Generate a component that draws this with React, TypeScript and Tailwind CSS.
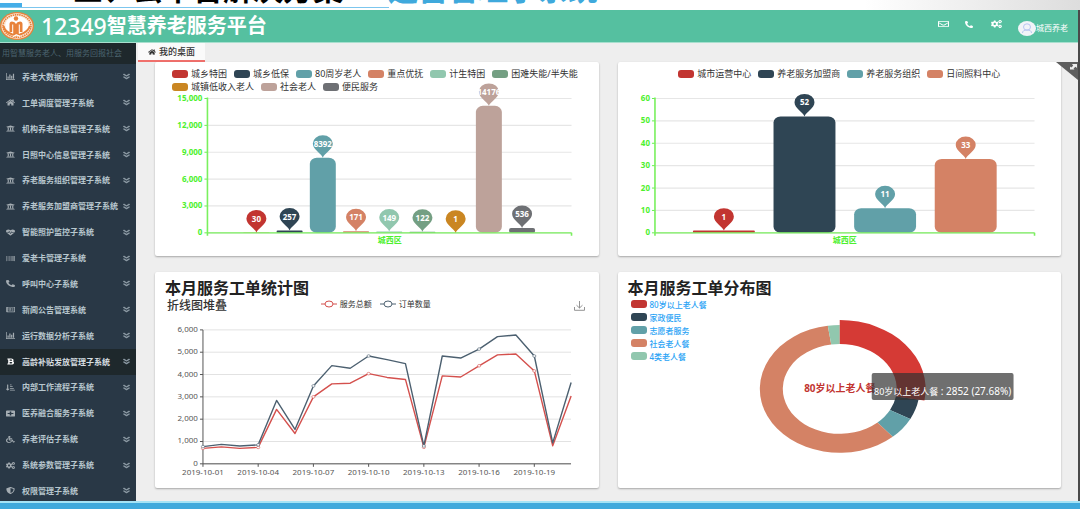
import React from "react";
import type { IconType } from "react-icons";
import {
  FaAngleDoubleDown,
  FaBarcode,
  FaBold,
  FaCogs,
  FaHeartbeat,
  FaHome,
  FaPhoneAlt,
  FaPlusSquare,
  FaRegEnvelope,
  FaRegNewspaper,
  FaShieldAlt,
  FaSortAmountDownAlt,
  FaUniversity,
  FaWheelchair,
} from "react-icons/fa";

interface LegendItem {
  name: string;
  color: string;
}

interface BarItem extends LegendItem {
  value: number;
}

const ChartIcon = ({ className }: { className?: string }) => (
  <svg viewBox="0 0 18 14" preserveAspectRatio="none" className={className} fill="currentColor">
    <path d="M0 0h1.4v12.6H18V14H0zM3 7h2.4v4.6H3zM6.6 3H9v8.6H6.6zM10.2 5.5h2.4v6.1h-2.4zM13.8 1.5h2.4v10.1h-2.4z" />
  </svg>
);

const menu: { label: string; icon: IconType | typeof ChartIcon; active?: boolean }[] = [
  { label: "养老大数据分析", icon: ChartIcon },
  { label: "工单调度管理子系统", icon: FaHome },
  { label: "机构养老信息管理子系统", icon: FaUniversity },
  { label: "日照中心信息管理子系统", icon: FaUniversity },
  { label: "养老服务组织管理子系统", icon: FaUniversity },
  { label: "养老服务加盟商管理子系统", icon: FaUniversity },
  { label: "智能照护监控子系统", icon: FaHeartbeat },
  { label: "爱老卡管理子系统", icon: FaBarcode },
  { label: "呼叫中心子系统", icon: FaPhoneAlt },
  { label: "新闻公告管理系统", icon: FaRegNewspaper },
  { label: "运行数据分析子系统", icon: ChartIcon },
  { label: "高龄补贴发放管理子系统", icon: FaBold, active: true },
  { label: "内部工作流程子系统", icon: FaSortAmountDownAlt },
  { label: "医养融合服务子系统", icon: FaPlusSquare },
  { label: "养老评估子系统", icon: FaWheelchair },
  { label: "系统参数管理子系统", icon: FaCogs },
  { label: "权限管理子系统", icon: FaShieldAlt },
];

const people: BarItem[] = [
  { name: "城乡特困", color: "#c23531", value: 30 },
  { name: "城乡低保", color: "#2f4554", value: 257 },
  { name: "80周岁老人", color: "#61a0a8", value: 8392 },
  { name: "重点优抚", color: "#d48265", value: 171 },
  { name: "计生特困", color: "#91c7ae", value: 149 },
  { name: "困难失能/半失能", color: "#749f83", value: 122 },
  { name: "城镇低收入老人", color: "#ca8622", value: 1 },
  { name: "社会老人", color: "#bda29a", value: 14176 },
  { name: "便民服务", color: "#6e7074", value: 536 },
];

const places: BarItem[] = [
  { name: "城市运营中心", color: "#c23531", value: 1 },
  { name: "养老服务加盟商", color: "#2f4554", value: 52 },
  { name: "养老服务组织", color: "#61a0a8", value: 11 },
  { name: "日间照料中心", color: "#d48265", value: 33 },
];

const pieLegend: LegendItem[] = [
  { name: "80岁以上老人餐", color: "#c23531" },
  { name: "家政便民", color: "#2f4554" },
  { name: "志愿者服务", color: "#61a0a8" },
  { name: "社会老人餐", color: "#d48265" },
  { name: "4类老人餐", color: "#91c7ae" },
];

const amounts = [690, 760, 690, 735, 2440, 1360, 3000, 3580, 3610, 4040, 3870, 3780, 740, 3940, 3890, 4390, 4880, 4920, 4160, 810, 3040];
const orders = [770, 870, 800, 850, 2840, 1540, 3490, 4400, 4280, 4830, 4670, 4490, 800, 4830, 4740, 5140, 5700, 5770, 4830, 940, 3640];
const dates = ["2019-10-01", "2019-10-04", "2019-10-07", "2019-10-10", "2019-10-13", "2019-10-16", "2019-10-19"];

const Legend = ({ items, className }: { items: LegendItem[]; className: string }) => (
  <ul className={className}>
    {items.map((item) => (
      <li key={item.name} className="flex items-center gap-[3px] whitespace-nowrap">
        <span className="h-2 w-4 rounded-[3px]" style={{ backgroundColor: item.color }} />
        {item.name}
      </li>
    ))}
  </ul>
);

interface BarChartProps {
  data: BarItem[];
  ticks: number[];
  left: number;
  right: number;
  first: number;
  step: number;
  barWidth: number;
  labelX: number;
}

const BarChart: React.FC<BarChartProps> = ({ data, ticks, left, right, first, step, barWidth, labelX }) => {
  const base = 140;
  const top = 5.5;
  const max = ticks[ticks.length - 1];
  const toY = (value: number) => base - ((base - top) * value) / max;

  return (
    <svg viewBox="0 0 444 163" className="block h-auto w-full overflow-visible">
      {ticks.map((tick) => (
        <g key={tick}>
          <path d={`M${left} ${toY(tick)}H${right}`} stroke="#e6e6e6" strokeWidth="1.2" />
          <path d={`M${left - 3} ${toY(tick)}h3`} stroke="#66f04c" />
          <text x={left - 5} y={toY(tick) + 2.5} textAnchor="end" fill="#4df02e" className="text-[8px] font-bold">
            {tick.toLocaleString("en-US")}
          </text>
        </g>
      ))}
      <path d={`M${left} ${top - 1}V${base + 3}M${right} ${base}v3`} stroke="#7af05e" strokeWidth="1.6" />
      {data.map((item, i) => {
        const x = first + i * step;
        const y = toY(item.value);
        const height = base - y;
        return (
          <rect
            key={item.name}
            x={x - barWidth / 2}
            y={y}
            width={barWidth}
            height={height}
            rx={Math.min(7, height / 2.5)}
            ry={Math.min(6, height / 2.5)}
            fill={item.color}
          />
        );
      })}
      <path d={`M${left} ${base}H${right}`} stroke="#7af05e" strokeWidth="1.4" />
      {data.map((item, i) => {
        const x = first + i * step;
        const y = toY(item.value);
        return (
          <g key={item.name}>
            <path
              d={`M${x} ${y}c-1.4-4.4-10-8-10-14.2a10 8.3 0 0 1 20 0c0 6.2-8.6 9.8-10 14.2z`}
              fill={item.color}
            />
            <text x={x} y={y - 11} textAnchor="middle" fill="#fff" className="text-[8px] font-bold">
              {item.value}
            </text>
          </g>
        );
      })}
      <text x={labelX} y="150" textAnchor="middle" fill="#4df02e" className="text-[8px] font-bold">
        城西区
      </text>
    </svg>
  );
};

const LineChart = () => {
  const toX = (i: number) => 48 + i * 18.43;
  const toY = (value: number) => 150 - value * 0.02235;
  const series = [
    { color: "#d4504d", values: amounts },
    { color: "#4c6070", values: orders },
  ];

  return (
    <svg viewBox="0 0 444 174" className="block h-auto w-full">
      {[0, 1000, 2000, 3000, 4000, 5000, 6000].map((tick) => (
        <g key={tick}>
          <path d={`M48 ${toY(tick)}H416.5`} stroke="#e2e2e2" />
          <path d={`M45 ${toY(tick)}h3`} stroke="#555" />
          <text x="43" y={toY(tick) + 2} textAnchor="end" fill="#555" className="text-[8px]">
            {tick.toLocaleString("en-US")}
          </text>
        </g>
      ))}
      <path d="M48 16V150H416.5" fill="none" stroke="#555" />
      {dates.map((date, i) => (
        <g key={date}>
          <path d={`M${toX(i * 3)} 150v3`} stroke="#555" />
          <text x={toX(i * 3)} y="161" textAnchor="middle" fill="#555" className="text-[8px]">
            {date}
          </text>
        </g>
      ))}
      {series.map(({ color, values }) => (
        <g key={color}>
          <polyline
            points={values.map((value, i) => `${toX(i)},${toY(value)}`).join(" ")}
            fill="none"
            stroke={color}
            strokeWidth="1.4"
            strokeLinejoin="round"
          />
          {values.map((value, i) =>
            i % 3 === 0 ? (
              <ellipse key={i} cx={toX(i)} cy={toY(value)} rx="1.6" ry="1.3" fill="#fff" stroke={color} strokeWidth="0.6" />
            ) : null
          )}
        </g>
      ))}
    </svg>
  );
};

// angles are in degrees, clockwise from the top
const slices = [
  { color: "#2f4554", from: 99.6, to: 118, rx: 80, ry: 64 },
  { color: "#61a0a8", from: 118, to: 138.5, rx: 80, ry: 64 },
  { color: "#d48265", from: 138.5, to: 351.4, rx: 80, ry: 64 },
  { color: "#91c7ae", from: 351.4, to: 360, rx: 80, ry: 64 },
  { color: "#d53a35", from: 0, to: 99.6, rx: 86, ry: 69 },
];

const slicePath = (from: number, to: number, rx: number, ry: number) => {
  const point = (deg: number, a: number, b: number) => {
    const rad = (deg * Math.PI) / 180;
    return `${222 + a * Math.sin(rad)} ${91 - b * Math.cos(rad)}`;
  };
  const large = to - from > 180 ? 1 : 0;
  return `M${point(from, rx, ry)}A${rx} ${ry} 0 ${large} 1 ${point(to, rx, ry)}L${point(to, 57, 45)}A57 45 0 ${large} 0 ${point(from, 57, 45)}Z`;
};

const PieChart = () => (
  <svg viewBox="0 0 444 190" className="col-start-1 row-start-1 block h-auto w-full">
    {slices.map((s) => (
      <path key={s.color} d={slicePath(s.from, s.to, s.rx, s.ry)} fill={s.color} />
    ))}
    <text x="222" y="94" textAnchor="middle" fill="#c23531" className="text-[10px] font-bold">
      80岁以上老人餐
    </text>
    <rect x="254" y="75" width="142" height="27" rx="2" fill="#323232" fillOpacity="0.7" />
    <text x="325" y="97" textAnchor="middle" fill="#fff" className="text-[9px]">
      80岁以上老人餐<tspan className="text-[10px]"> : 2852 (27.68%)</tspan>
    </text>
  </svg>
);

const Logo = () => (
  <svg viewBox="0 0 34 28" className="h-7 w-[34px]" fill="none">
    <ellipse cx="17" cy="14" rx="17" ry="14" fill="#e8823a" />
    <ellipse cx="17" cy="14" rx="15.6" ry="12.7" fill="#fbe9d8" />
    <ellipse cx="17" cy="14" rx="14" ry="11.3" stroke="#e8823a" strokeWidth="1.6" strokeDasharray="1.5 0.7" />
    <ellipse cx="17" cy="13.5" rx="11.5" ry="9.5" fill="#fff" />
    <circle cx="16" cy="6.5" r="2.2" fill="#e8823a" />
    <path d="M9.5 20V12q0-2.500 2.500-2.500 3 0 4 2.500 1-2.500 4-2.500 2.500 0 2.500 2.500v8h-2.700v-7.500h-1V22h-5.600v-9.500h-1V20z" fill="#e8823a" />
    <path d="M3.5 14q1 6 9 8.5l3.5 1 4-1q8-2.500 10-8.500" stroke="#e8823a" strokeWidth="2" />
    <path d="M13 24.500l3.500-1.500 4 1.500" stroke="#fff" strokeWidth="1.2" />
  </svg>
);

const LineMark = ({ color }: { color: string }) => (
  <svg viewBox="0 0 16 8" className="h-2 w-4" fill="#fff" stroke={color}>
    <path d="M0 4h16" />
    <ellipse cx="8" cy="4" rx="4" ry="3" />
  </svg>
);

const cardClass = "rounded-[2px] bg-white shadow-[0_1px_2px_rgba(0,0,0,0.3)]";

export default function App() {
  return (
    <div className="flex min-h-screen flex-col bg-[#eee] font-['Noto_Sans','Noto_Sans_CJK_SC',sans-serif] text-[#333]">
      <div className="relative flex h-2.5 items-end overflow-hidden bg-linear-to-r from-white from-80% to-[#ddd] pb-1.5 pl-[73px] text-[30px] leading-[30px] font-bold">
        <span className="absolute top-[3px] left-0 h-[5px] w-[22px] bg-[#45aee8]" />
        <span className="absolute top-[7px] left-0 h-px w-[389px] bg-[#7cc6ee]" />
        <h1 className="flex gap-[45px] whitespace-nowrap text-black">
          三、云平台解决方案
          <span className="text-[#3fa9dc]">运营管理子系统</span>
        </h1>
      </div>

      <div className="flex flex-1 flex-col border-r-2 border-[#4a4a4a]">
        <header className="flex h-[33px] items-center justify-between border-b border-[#a8dfce] bg-[#55c0a0] pr-2.5 text-white">
          <div className="flex items-center gap-[7px]">
            <Logo />
            <h2 className="flex items-center text-[20px] leading-8 font-bold whitespace-nowrap">
              <span className="text-[23px] font-medium">12349</span>
              智慧养老服务平台
            </h2>
          </div>
          <div className="flex items-center">
            <button type="button" aria-label="消息" className="mr-4 mb-1">
              <FaRegEnvelope preserveAspectRatio="none" className="h-2 w-[11px]" />
            </button>
            <button type="button" aria-label="电话" className="mr-[18px] mb-1">
              <FaPhoneAlt preserveAspectRatio="none" className="h-[7px] w-2" />
            </button>
            <button type="button" aria-label="设置" className="mr-4 mb-1">
              <FaCogs preserveAspectRatio="none" className="h-2 w-[11px]" />
            </button>
            <a href="#" className="flex items-center pt-1 text-[8px] leading-4">
              <svg viewBox="0 0 18 15" className="h-[15px] w-[18px]" fill="none" stroke="#b9c6f2">
                <ellipse cx="9" cy="7.5" rx="9" ry="7.5" fill="#f2f4f8" stroke="none" />
                <ellipse cx="9" cy="6" rx="3.5" ry="3.2" />
                <path d="M4.5 12q0-3 4.500-3t4.500 3" />
              </svg>
              城西养老
            </a>
          </div>
        </header>

        <div className="flex flex-1">
          <aside className="flex w-[136px] shrink-0 flex-col overflow-hidden bg-[#293846] text-[8px]">
            <p className="h-[21px] bg-[#1e282c] pl-0.5 leading-[19px] whitespace-nowrap text-[#4b646f]">
              用智慧服务老人、用服务回报社会
            </p>
            <nav className="-mb-[3px] flex flex-1 flex-col">
              {menu.map(({ label, icon: Icon, active }) => (
                <a
                  key={label}
                  href="#"
                  className={`flex flex-1 items-center px-1.5 leading-3 font-bold whitespace-nowrap ${
                    active ? "bg-[#1e282c] text-[#d5dde0]" : "text-[#b8c7ce]"
                  }`}
                >
                  <Icon preserveAspectRatio="none" className={`mr-[7px] h-[7px] w-[9px] ${active ? "px-px text-white" : "text-[#a5adb3]"}`} />
                  {label}
                  <FaAngleDoubleDown preserveAspectRatio="none" className="ml-auto h-[7px] w-[7px] text-[#8b99a3]" />
                </a>
              ))}
            </nav>
          </aside>

          <main className="relative min-w-0 flex-1">
            <div className="flex h-[19px] pl-0.5">
              <button type="button" className="flex items-center gap-[3px] border-b-2 border-b-[#f0706c] bg-[#fafafa] px-2.5 text-[9px] leading-4 font-medium">
                <FaHome preserveAspectRatio="none" className="h-1.5 w-2" />
                我的桌面
              </button>
            </div>
            <button type="button" aria-label="全屏" className="absolute top-[19px] right-0">
              <svg viewBox="0 0 22 18" className="h-[18px] w-[22px]">
                <path d="M0 0h22v18z" fill="#5e5e5e" />
                <path d="M16 2h5v4l-1.500-1.200-2 1.600 1 1.100H14V4.500l1.200 1 2-1.700z" fill="#eee" />
              </svg>
            </button>

            <div className="grid grid-cols-2 gap-x-[19px] gap-y-4 pr-[17px] pb-[13px] pl-[19px]">
              <section className={`${cardClass} pt-[5px]`}>
                <Legend items={people} className="flex min-h-[26px] flex-wrap gap-x-[7px] px-[17px] text-[9px] leading-[13px]" />
                <BarChart
                  data={people}
                  ticks={[0, 3000, 6000, 9000, 12000, 15000]}
                  left={52.5}
                  right={417}
                  first={101.5}
                  step={33.25}
                  barWidth={26}
                  labelX={235}
                />
              </section>

              <section className={`${cardClass} pt-[5px]`}>
                <Legend items={places} className="flex min-h-[26px] flex-wrap content-start justify-center gap-x-[7px] text-[9px] leading-[13px]" />
                <BarChart
                  data={places}
                  ticks={[0, 10, 20, 30, 40, 50, 60]}
                  left={37}
                  right={417}
                  first={106}
                  step={80.7}
                  barWidth={62}
                  labelX={227}
                />
              </section>

              <section className={`${cardClass} pt-2`}>
                <h3 className="pl-2.5 text-[16px] leading-4 font-bold text-[#222]">本月服务工单统计图</h3>
                <div className="grid grid-cols-[1fr_auto_1fr] pt-0.5 pr-3.5 pl-3">
                  <h4 className="text-[12px] leading-4 font-medium">折线图堆叠</h4>
                  <ul className="flex gap-2 self-start text-[8px] leading-3">
                    <li className="flex items-center gap-[3px]">
                      <LineMark color="#d4504d" />
                      服务总额
                    </li>
                    <li className="flex items-center gap-[3px]">
                      <LineMark color="#4c6070" />
                      订单数量
                    </li>
                  </ul>
                  <button type="button" aria-label="下载" className="justify-self-end">
                    <svg viewBox="0 0 11 10" className="h-2.5 w-[11px]" fill="none" stroke="#888" strokeWidth="0.9">
                      <path d="M5.5 0v7M2.5 4.200l3 2.800 3-2.800M.5 6v3.300h10V6" />
                    </svg>
                  </button>
                </div>
                <LineChart />
              </section>

              <section className={`${cardClass} pt-2`}>
                <h3 className="pl-2.5 text-[16px] leading-4 font-bold text-[#222]">本月服务工单分布图</h3>
                <div className="grid pt-0.5">
                  <Legend
                    items={pieLegend}
                    className="col-start-1 row-start-1 flex flex-col pl-[13px] text-[8px] leading-[13px] font-medium text-[#2aa3f5]"
                  />
                  <PieChart />
                </div>
              </section>
            </div>
          </main>
        </div>
      </div>

      <footer className="h-2 border-t-2 border-[#a5e3f5] bg-[#3fa9dc]" />
    </div>
  );
}
